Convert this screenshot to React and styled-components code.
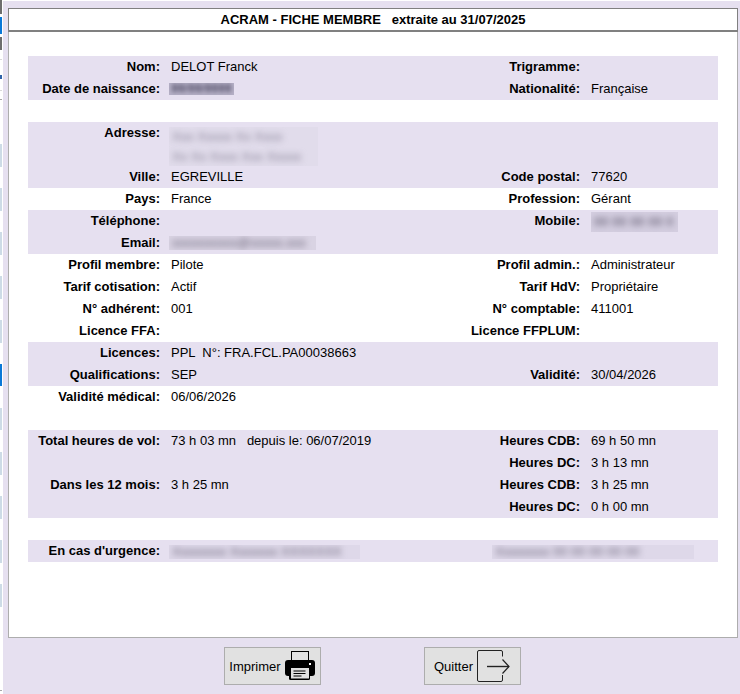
import React from "react";
import styled, { createGlobalStyle } from "styled-components";

const Global = createGlobalStyle`
  html, body { margin: 0; padding: 0; background: #fff; }
  body { font-family: "Liberation Sans", Arial, sans-serif; font-size: 13px; color: #000; }
`;

const Page = styled.div`
  display: flex;
  width: 740px;
  height: 694px;
  overflow: hidden;
`;

const Behind = styled.div`
  width: 3px;
  flex: none;
  display: flex;
  flex-direction: column;
`;

const BehindBit = styled.div`
  width: 2px;
  height: ${(p) => p.$h}px;
  margin-top: ${(p) => p.$gap}px;
  background: ${(p) => p.$c};
`;

const Dialog = styled.div`
  flex: 1;
  margin-top: 1px;
  padding: 7px 2px 0 5px;
  background: #e6e0f0;
  display: flex;
  flex-direction: column;
`;

const Title = styled.div`
  height: 24px;
  box-sizing: border-box;
  border: 1px solid #808080;
  border-bottom-width: 2px;
  background: #fff;
  font-weight: bold;
  line-height: 21px;
  text-align: center;
  white-space: pre;
`;

const Sheet = styled.div`
  height: 606px;
  box-sizing: border-box;
  padding: 24px 19px 0;
  background: #fff;
  border: 1px solid #adadad;
  border-top: 0;
`;

const Band = styled.div`
  width: 690px;
  background: ${(p) => (p.$plain ? "#fff" : "#e6e0f0")};
`;

const Gap = styled.div`
  height: 22px;
`;

const Row = styled.div`
  display: grid;
  grid-template-columns: 132px 278px 120px 127px;
  column-gap: 11px;
  min-height: 22px;
  line-height: 22px;
  white-space: pre;
`;

const Label = styled.div`
  font-weight: bold;
  text-align: right;
`;

const Value = styled.div``;

const Smudge = styled.div`
  width: ${(p) => p.$w}px;
  height: ${(p) => p.$h}px;
  margin: ${(p) => p.$top}px 0 0 ${(p) => p.$left ?? -2}px;
  background: ${(p) => p.$bg || "#ded8e9"};
  overflow: hidden;
  line-height: ${(p) => p.$line ?? 14}px;
`;

const SmudgeText = styled.div`
  padding-left: 3px;
  color: ${(p) => p.$c || "#6a6478"};
  filter: blur(${(p) => p.$blur ?? 3}px);
  font-size: ${(p) => p.$size ?? 13}px;
  letter-spacing: ${(p) => p.$spread ?? 0}px;
  font-weight: ${(p) => (p.$strong ? "bold" : "normal")};
`;

const WideSmudge = styled(Smudge)`
  grid-column: 3 / 5;
`;

const Footer = styled.div`
  display: flex;
  justify-content: center;
  gap: 103px;
  padding: 9px 2px 0 0;
`;

const Button = styled.button`
  width: 97px;
  height: 38px;
  box-sizing: border-box;
  padding: 0;
  display: flex;
  align-items: center;
  justify-content: center;
  gap: 4px;
  background: #e1e1e1;
  border: 1px solid #adadad;
  border-radius: 0;
  font: 13px "Liberation Sans", Arial, sans-serif;
  color: #000;
`;

const strip = [
  [0, 14, "#6d6d6d"], [3, 17, "#0a78d7"], [3, 13, "#6d6d6d"], [9, 1, "#d8d8d8"],
  [15, 4, "#2f62a8"], [11, 1, "#d8d8d8"], [8, 1, "#a8a8a8"],
  [44, 23, "#cddbe6"], [21, 23, "#cddbe6"], [21, 23, "#cddbe6"], [21, 23, "#cddbe6"], [21, 23, "#cddbe6"],
  [21, 22, "#0a78d7"],
  [22, 22, "#cddbe6"], [22, 23, "#cddbe6"], [21, 23, "#cddbe6"], [21, 23, "#cddbe6"], [21, 23, "#cddbe6"],
  [83, 1, "#a8a8a8"],
];

const Printer = () => (
  <svg width="30" height="30" viewBox="0 0 30 30">
    <rect x="6.5" y="0.5" width="17" height="10" fill="#e1e1e1" stroke="#000" />
    <path d="M3 9h24a3 3 0 0 1 3 3v10a3 3 0 0 1-3 3H3a3 3 0 0 1-3-3V12a3 3 0 0 1 3-3z" fill="#000" />
    <rect x="4" y="16" width="21" height="13" rx="1.5" fill="#000" />
    <rect x="6" y="17" width="18" height="10.5" fill="#e1e1e1" />
    <path d="M8.5 20h12M8.5 22.5h12M8.5 25h8" stroke="#000" />
    <rect x="24" y="12" width="2" height="2" fill="#fff" />
  </svg>
);

const Exit = () => (
  <svg width="33" height="33" viewBox="0 0 33 33" fill="none" stroke="#222">
    <path d="M25.5 6.5V2Q25.5.5 24 .5H2Q.5.5.5 2V30Q.5 31.5 2 31.5H24Q25.5 31.5 25.5 30V25" />
    <path d="M10 16.5H32" strokeWidth="1.4" />
    <path d="M25.5 9.5L32 16.5L25.5 23.5" strokeWidth="1.2" />
  </svg>
);

const Line = ({ a, b, c, d }) => (
  <Row>
    <Label>{a}</Label>
    <Value>{b}</Value>
    <Label>{c}</Label>
    <Value>{d}</Value>
  </Row>
);

export default function App() {
  return (
    <Page>
      <Global />
      <Behind>
        {strip.map(([gap, h, c], i) => (
          <BehindBit key={i} $gap={gap} $h={h} $c={c} />
        ))}
      </Behind>
      <Dialog>
        <Title>{"ACRAM - FICHE MEMBRE   extraite au 31/07/2025"}</Title>
        <Sheet>
          <Band>
            <Line a="Nom:" b="DELOT Franck" c="Trigramme:" />
            <Row>
              <Label>Date de naissance:</Label>
              <Smudge $w={65} $h={12} $top={5} $line={12} $bg="#b5b0c6">
                <SmudgeText $c="#3a3550" $blur={2.2} $size={10} $spread={1} $strong>00/00/0000</SmudgeText>
              </Smudge>
              <Label>Nationalité:</Label>
              <Value>Française</Value>
            </Row>
          </Band>
          <Gap />
          <Band>
            <Row>
              <Label>Adresse:</Label>
              <Smudge $w={149} $h={39} $top={5} $line={20} $bg="#e1dceb">
                <SmudgeText $c="#8a8498">Xxx Xxxxx Xx Xxxx</SmudgeText>
                <SmudgeText $c="#8a8498">Xx Xx Xxxx Xxx Xxxxx</SmudgeText>
              </Smudge>
            </Row>
            <Line a="Ville:" b="EGREVILLE" c="Code postal:" d="77620" />
          </Band>
          <Band $plain>
            <Line a="Pays:" b="France" c="Profession:" d="Gérant" />
          </Band>
          <Band>
            <Row>
              <Label>Téléphone:</Label>
              <Value />
              <Label>Mobile:</Label>
              <Smudge $w={87} $h={20} $top={2} $left={0} $line={20} $bg="#d4cee0">
                <SmudgeText $c="#7a7488" $strong>00 00 00 00 0</SmudgeText>
              </Smudge>
            </Row>
            <Row>
              <Label>Email:</Label>
              <Smudge $w={147} $h={14} $top={4} $bg="#d9d3e3">
                <SmudgeText>xxxxxxxxxx@xxxxx.xxx</SmudgeText>
              </Smudge>
            </Row>
          </Band>
          <Band $plain>
            <Line a="Profil membre:" b="Pilote" c="Profil admin.:" d="Administrateur" />
            <Line a="Tarif cotisation:" b="Actif" c="Tarif HdV:" d="Propriétaire" />
            <Line a="N° adhérent:" b="001" c="N° comptable:" d="411001" />
            <Line a="Licence FFA:" c="Licence FFPLUM:" />
          </Band>
          <Band>
            <Line a="Licences:" b="PPL  N°: FRA.FCL.PA00038663" />
            <Line a="Qualifications:" b="SEP" c="Validité:" d="30/04/2026" />
          </Band>
          <Band $plain>
            <Line a="Validité médical:" b="06/06/2026" />
          </Band>
          <Gap />
          <Band>
            <Line a="Total heures de vol:" b="73 h 03 mn   depuis le: 06/07/2019" c="Heures CDB:" d="69 h 50 mn" />
            <Line c="Heures DC:" d="3 h 13 mn" />
            <Line a="Dans les 12 mois:" b="3 h 25 mn" c="Heures CDB:" d="3 h 25 mn" />
            <Line c="Heures DC:" d="0 h 00 mn" />
          </Band>
          <Gap />
          <Band>
            <Row>
              <Label>En cas d'urgence:</Label>
              <Smudge $w={191} $h={14} $top={5}>
                <SmudgeText>Xxxxxxxx Xxxxxxx XXXXXXX</SmudgeText>
              </Smudge>
              <WideSmudge $w={202} $h={14} $top={5} $left={32}>
                <SmudgeText>Xxxxxxxx 00 00 00 00 00</SmudgeText>
              </WideSmudge>
            </Row>
          </Band>
        </Sheet>
        <Footer>
          <Button>
            Imprimer
            <Printer />
          </Button>
          <Button>
            Quitter
            <Exit />
          </Button>
        </Footer>
      </Dialog>
    </Page>
  );
}
